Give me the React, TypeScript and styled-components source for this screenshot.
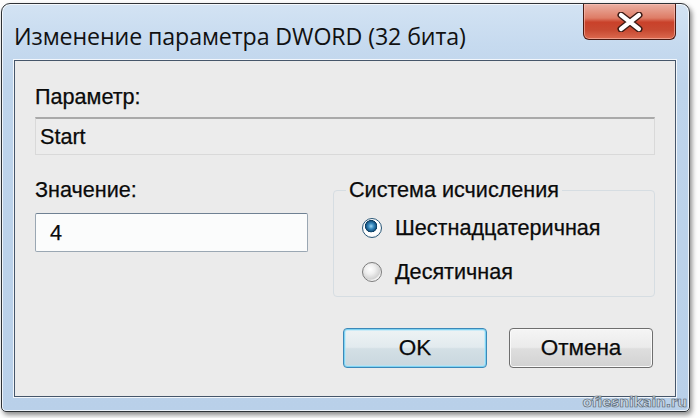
import React from "react";
import styled, { createGlobalStyle } from "styled-components";

const Global = createGlobalStyle`
  html, body { margin: 0; padding: 0; background: #ffffff; }
  body { font-family: "Liberation Sans", Arial, sans-serif; }
`;

const Page = styled.div`
  width: 700px;
  height: 418px;
  padding: 3px 0 0 1px;
  box-sizing: border-box;
  background: #fdfdfd;
`;

const Window = styled.div`
  position: relative;
  width: 689px;
  height: 409px;
  box-sizing: border-box;
  border: 1px solid #2e3236;
  border-radius: 9px 9px 5px 5px;
  background: linear-gradient(180deg, #d3e3f3 0%, #c6daef 10%, #bed4eb 20%, #b9d0e9 100%);
  box-shadow: 2px 3px 5px rgba(0, 0, 0, 0.45), inset 0 0 0 1px rgba(255, 255, 255, 0.75);
  padding: 0 13px 14px 12px;
  display: flex;
  flex-direction: column;
`;

const TitleBar = styled.div`
  height: 56px;
  display: flex;
  align-items: flex-start;
  justify-content: space-between;
`;

const Title = styled.div`
  margin-top: 18px;
  font-family: "Open Sans", "Liberation Sans", sans-serif;
  font-size: 23.2px;
  line-height: 28px;
  color: #111;
  letter-spacing: -0.1px;
`;

const CloseButton = styled.div`
  width: 93px;
  height: 36px;
  box-sizing: border-box;
  border: 1px solid #4a1a12;
  border-top: none;
  border-radius: 0 0 6px 6px;
  background: linear-gradient(180deg, #eab0a2 0%, #de7c66 40%, #c9412a 52%, #c84a32 75%, #dc6a4f 100%);
  box-shadow: inset 0 0 0 1px rgba(255, 200, 190, 0.55);
  display: flex;
  align-items: center;
  justify-content: center;
`;

const Client = styled.div`
  flex: 1;
  box-sizing: border-box;
  border: 1px solid #46566a;
  box-shadow: 0 0 0 1px rgba(255, 255, 255, 0.8);
  background: #ebebeb;
  padding: 24px 20px 0 20px;
  display: flex;
  flex-direction: column;
  font-size: 21.6px;
  color: #0a0a0a;
  -webkit-text-stroke: 0.25px #0a0a0a;
`;

const Label = styled.div`
  line-height: 24px;
  height: 24px;
  white-space: nowrap;
`;

const ReadOnlyField = styled.div`
  margin-top: 8px;
  height: 38px;
  box-sizing: border-box;
  border: 1px solid #d9d9d9;
  border-top: 2px solid #a9a9a9;
  background: #ececec;
  padding-left: 4px;
  display: flex;
  align-items: center;
`;

const Row = styled.div`
  margin-top: 23px;
  display: flex;
  align-items: flex-start;
  gap: 25px;
`;

const LeftCol = styled.div`
  width: 273px;
  display: flex;
  flex-direction: column;
`;

const TextInput = styled.div`
  margin-top: 11px;
  height: 39px;
  box-sizing: border-box;
  border: 1px solid #9aa7b3;
  border-top-color: #6f8193;
  border-radius: 2px;
  background: #fbfcfc;
  padding-left: 14px;
  display: flex;
  align-items: center;
`;

const Group = styled.fieldset`
  margin: 0;
  width: 322px;
  box-sizing: border-box;
  border: 1px solid #d6dde2;
  border-radius: 4px;
  padding: 0 0 12px 0;
  min-width: 0;
`;

const Legend = styled.legend`
  padding: 0 3px;
  margin-left: 12px;
  line-height: 24px;
  height: 24px;
  white-space: nowrap;
`;

const RadioRow = styled.div<{ $first?: boolean }>`
  margin-top: ${(p) => (p.$first ? "14px" : "20px")};
  margin-left: 28px;
  height: 24px;
  display: flex;
  align-items: center;
  gap: 13px;
  white-space: nowrap;
`;

const RadioCircle = styled.span<{ $checked?: boolean }>`
  width: 20px;
  height: 20px;
  box-sizing: border-box;
  border-radius: 50%;
  border: 1px solid ${(p) => (p.$checked ? "#2a5878" : "#7c7c7c")};
  background: ${(p) =>
    p.$checked
      ? "radial-gradient(circle at 45% 40%, #9fd6f2 0%, #3b8cc0 18%, #1d5f8e 32%, #0d3b5e 40%, #ffffff 44%, #ffffff 60%, #d8dde2 100%)"
      : "radial-gradient(circle at 40% 35%, #ffffff 0%, #f0f0f0 30%, #d2d2d2 62%, #f4f4f4 70%, #e6e6e6 100%)"};
  flex: none;
`;

const ButtonRow = styled.div`
  margin-top: 31px;
  display: flex;
  justify-content: flex-end;
  gap: 22px;
  padding-right: 2px;
`;

const Button = styled.div<{ $default?: boolean }>`
  width: 144px;
  height: 40px;
  box-sizing: border-box;
  border-radius: 4px;
  border: 1px solid ${(p) => (p.$default ? "#3c88b8" : "#6e6e6e")};
  background: ${(p) =>
    p.$default
      ? "linear-gradient(180deg, #eef3f5 0%, #e2eaee 48%, #d3dfe5 52%, #c9d7de 100%)"
      : "linear-gradient(180deg, #f5f5f5 0%, #ebebeb 48%, #dedede 52%, #d2d2d2 100%)"};
  box-shadow: ${(p) =>
    p.$default
      ? "inset 0 0 0 1px #7fd3f2, inset 0 0 0 2px rgba(180, 230, 248, 0.6)"
      : "inset 0 0 0 1px #fafafa"};
  display: flex;
  align-items: center;
  justify-content: center;
  font-size: 22.5px;
  color: #0b0b0b;
`;

const Watermark = styled.div`
  position: absolute;
  right: 2px;
  bottom: 1px;
  font-family: "DejaVu Sans", sans-serif;
  font-size: 14px;
  font-weight: bold;
  letter-spacing: -0.3px;
  color: #c9d6e4;
  -webkit-text-stroke: 0.6px #4d5a66;
`;

export default function App() {
  return (
    <Page>
      <Global />
      <Window>
        <TitleBar>
          <Title>Изменение параметра DWORD (32 бита)</Title>
          <CloseButton>
            <svg width="26" height="20" viewBox="0 0 26 20">
              <path d="M4 3 L22 17 M22 3 L4 17" stroke="#3a1a14" strokeWidth="7" strokeLinecap="round" />
              <path d="M4 3 L22 17 M22 3 L4 17" stroke="#ffffff" strokeWidth="4.2" strokeLinecap="round" />
            </svg>
          </CloseButton>
        </TitleBar>
        <Client>
          <Label>Параметр:</Label>
          <ReadOnlyField>Start</ReadOnlyField>
          <Row>
            <LeftCol>
              <Label>Значение:</Label>
              <TextInput>4</TextInput>
            </LeftCol>
            <Group>
              <Legend>Система исчисления</Legend>
              <RadioRow $first>
                <RadioCircle $checked />
                <span>Шестнадцатеричная</span>
              </RadioRow>
              <RadioRow>
                <RadioCircle />
                <span>Десятичная</span>
              </RadioRow>
            </Group>
          </Row>
          <ButtonRow>
            <Button $default>OK</Button>
            <Button>Отмена</Button>
          </ButtonRow>
        </Client>
        <Watermark>ofiesnikain.ru</Watermark>
      </Window>
    </Page>
  );
}
